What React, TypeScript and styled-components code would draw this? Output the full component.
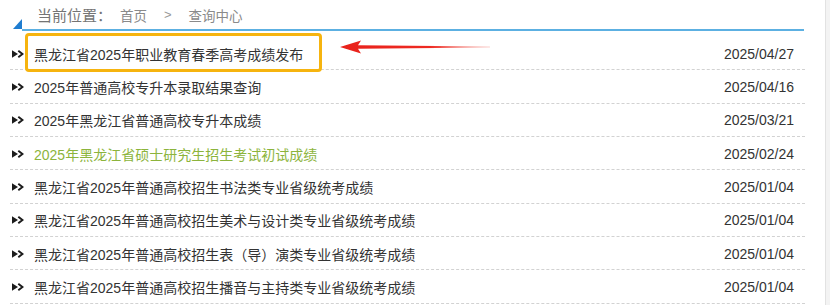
import { createGlobalStyle, styled } from "styled-components";

const GlobalStyle = createGlobalStyle`
  html, body {
    margin: 0;
    padding: 0;
    background: #f3f3f3;
  }
  body {
    font-family: "Liberation Sans", "Noto Sans CJK SC", sans-serif;
  }
`;

const Panel = styled.div`
  width: 826px;
  height: 305px;
  background: #fff;
  border-right: 1px solid #e2e2e2;
  box-sizing: border-box;
  overflow: hidden;
`;

const Inner = styled.div`
  width: 795px;
  margin-left: 10px;
`;

const HeaderRow = styled.div`
  display: flex;
  align-items: flex-end;
  padding-left: 3px;
  height: 31px;
`;

const Corner = styled.span`
  width: 0;
  height: 0;
  margin-bottom: 2px;
  border-left: 9px solid transparent;
  border-bottom: 10px solid #1f7dd0;
`;

const Crumbs = styled.div`
  flex: 1;
  display: flex;
  align-items: center;
  height: 29px;
  padding-left: 15px;
  margin-right: 1px;
  border-bottom: 2px solid #5cb0e2;
  color: #8a8a8a;
`;

const CrumbLabel = styled.span`
  font-size: 15px;
  color: #747474;
  margin-right: 8px;
`;

const CrumbLink = styled.span`
  font-size: 13.5px;
`;

const CrumbSep = styled.span`
  font-size: 13px;
  margin: 0 17px 0 17px;
  color: #999;
`;

const List = styled.ul`
  list-style: none;
  margin: 6px 0 0;
  padding: 0;
`;

const Item = styled.li`
  position: relative;
  display: flex;
  align-items: center;
  height: 33.33px;
  box-sizing: border-box;
  padding: 1px 11px 0 2px;
  border-bottom: 1px dashed #d2d2d2;
  font-size: 14px;
`;

const Bullet = styled.svg`
  width: 12px;
  height: 8px;
  flex-shrink: 0;
  margin-right: 10px;
`;

const Title = styled.span<{ $green?: boolean }>`
  position: relative;
  flex: 1;
  color: ${(p) => (p.$green ? "#8cb43c" : "#333")};
`;

const Highlight = styled.span`
  position: absolute;
  left: -9px;
  top: 50%;
  margin-top: -21px;
  width: 297px;
  height: 39px;
  box-sizing: border-box;
  border: 3px solid #f6b40f;
  border-radius: 4px;
  pointer-events: none;
`;

const Pointer = styled.svg`
  position: absolute;
  left: 306px;
  top: 50%;
  margin-top: -15px;
  width: 150px;
  height: 16px;
`;

const Date = styled.span`
  color: #333;
`;

type Row = { title: string; date: string; green?: boolean; marked?: boolean };

const rows: Row[] = [
  { title: "黑龙江省2025年职业教育春季高考成绩发布", date: "2025/04/27", marked: true },
  { title: "2025年普通高校专升本录取结果查询", date: "2025/04/16" },
  { title: "2025年黑龙江省普通高校专升本成绩", date: "2025/03/21" },
  { title: "2025年黑龙江省硕士研究生招生考试初试成绩", date: "2025/02/24", green: true },
  { title: "黑龙江省2025年普通高校招生书法类专业省级统考成绩", date: "2025/01/04" },
  { title: "黑龙江省2025年普通高校招生美术与设计类专业省级统考成绩", date: "2025/01/04" },
  { title: "黑龙江省2025年普通高校招生表（导）演类专业省级统考成绩", date: "2025/01/04" },
  { title: "黑龙江省2025年普通高校招生播音与主持类专业省级统考成绩", date: "2025/01/04" },
];

function BulletIcon() {
  return (
    <Bullet viewBox="0 0 12 8">
      <polygon points="0,0.3 6,4 0,7.7" fill="#1c1c1c" />
      <polyline points="6.3,0.8 10.5,4 6.3,7.2" fill="none" stroke="#1c1c1c" strokeWidth="2" />
    </Bullet>
  );
}

export default function App() {
  return (
    <>
      <GlobalStyle />
      <Panel>
        <Inner>
          <HeaderRow>
            <Corner />
            <Crumbs>
              <CrumbLabel>当前位置：</CrumbLabel>
              <CrumbLink>首页</CrumbLink>
              <CrumbSep>&gt;</CrumbSep>
              <CrumbLink>查询中心</CrumbLink>
            </Crumbs>
          </HeaderRow>
          <List>
            {rows.map((r) => (
              <Item key={r.title}>
                <BulletIcon />
                <Title $green={r.green}>
                  {r.title}
                  {r.marked ? (
                    <>
                      <Highlight />
                      <Pointer viewBox="0 0 150 16">
                        <defs>
                          <linearGradient id="tail" x1="0" x2="1" y1="0" y2="0">
                            <stop offset="0" stopColor="#e8221b" />
                            <stop offset="0.6" stopColor="#ee2a22" />
                            <stop offset="1" stopColor="#f06a60" stopOpacity="0.3" />
                          </linearGradient>
                        </defs>
                        <polygon points="0,8 21,1.5 18,6.2 150,7.4 150,8.6 18,9.8 21,14.5" fill="url(#tail)" />
                      </Pointer>
                    </>
                  ) : null}
                </Title>
                <Date>{r.date}</Date>
              </Item>
            ))}
          </List>
        </Inner>
      </Panel>
    </>
  );
}
